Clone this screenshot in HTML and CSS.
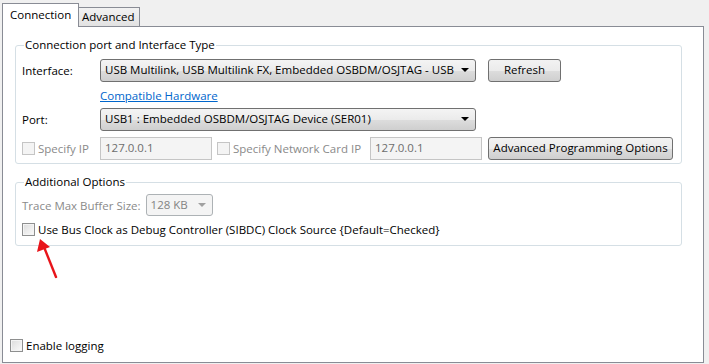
FILE: index.html
```html
<!DOCTYPE html>
<html>
<head>
    <title>Connection</title>
    <link rel="stylesheet" href="styles.css">
</head>
<body>
    <div class="tabs">
        <div class="tab active">Connection</div>
        <div class="tab">Advanced</div>
    </div>
    <div class="panel">
        <fieldset class="group first">
            <legend>Connection port and Interface Type</legend>
            <div class="row">
                <span class="label">Interface:</span>
                <div class="combo wide">USB Multilink, USB Multilink FX, Embedded OSBDM/OSJTAG - USB <span class="arrow"></span></div>
                <div class="button refresh">Refresh</div>
            </div>
            <div class="row link-row">
                <span class="label"></span>
                <a class="link" href="#">Compatible Hardware</a>
            </div>
            <div class="row">
                <span class="label">Port:</span>
                <div class="combo wide">USB1 : Embedded OSBDM/OSJTAG Device (SER01) <span class="arrow"></span></div>
            </div>
            <div class="row">
                <span class="label check disabled"><span class="box"></span>Specify IP</span>
                <div class="field ip">127.0.0.1</div>
                <span class="check disabled net"><span class="box"></span>Specify Network Card IP</span>
                <div class="field ip">127.0.0.1</div>
                <div class="button adv">Advanced Programming Options</div>
            </div>
        </fieldset>

        <fieldset class="group second">
            <legend>Additional Options</legend>
            <div class="row">
                <span class="muted">Trace Max Buffer Size:</span>
                <div class="combo small disabled-combo">128 KB <span class="arrow"></span></div>
            </div>
            <div class="row">
                <span class="check"><span class="box"></span>Use Bus Clock as Debug Controller (SIBDC) Clock Source {Default=Checked}</span>
            </div>
        </fieldset>

        <div class="logging">
            <span class="check"><span class="box"></span>Enable logging</span>
        </div>

        <svg class="pointer" width="30" height="50" viewBox="0 0 30 50">
            <line x1="23" y1="44" x2="11" y2="14" stroke="#e8141a" stroke-width="2.4" stroke-linecap="round"/>
            <polygon points="7,6 4,19 17,14" fill="#e8141a"/>
        </svg>
    </div>
</body>
</html>
```

FILE: styles.css
```css
body {
    margin: 0;
    width: 709px;
    height: 364px;
    background: #f0f0f0;
    font-family: "Open Sans", "Noto Sans", sans-serif;
    font-size: 11.5px;
    color: #000;
    overflow: hidden;
}

.tabs {
    display: flex;
    align-items: flex-end;
    height: 26px;
    padding-left: 2px;
}

.tab {
    box-sizing: border-box;
    height: 19px;
    padding: 0 4px 0 3px;
    line-height: 18px;
    border: 1px solid #898c95;
    border-bottom: none;
    background: linear-gradient(#f2f2f2, #e2e2e2);
    margin-left: -1px;
}

.tab.active {
    height: 24px;
    padding: 0 7px 0 7px;
    line-height: 22px;
    background: #fff;
    margin-left: 0;
    margin-bottom: -1px;
    position: relative;
    z-index: 1;
    width: 77px;
}

.panel {
    position: relative;
    box-sizing: border-box;
    height: 337px;
    margin: 0 5px 0 2px;
    border: 1px solid #898c95;
    background: #fff;
    display: flex;
    flex-direction: column;
    padding: 10px 21px 7px 12px;
}

.group {
    margin: 0;
    padding: 0 6px;
    border: 1px solid #d5dfe5;
    border-radius: 3px;
}

.group legend {
    padding: 0 1px;
    margin-left: 2px;
    line-height: 16px;
}

.group.first {
    padding-top: 6px;
    padding-bottom: 3px;
}

.group.second {
    margin-top: 10px;
    padding-top: 4px;
    padding-bottom: 5px;
}

.row {
    display: flex;
    align-items: center;
    height: 23px;
    margin-bottom: 6px;
}

.group.first .row:last-child,
.group.second .row:last-child {
    margin-bottom: 0;
}

.first .row:first-child {
    margin-bottom: 4px;
}

.link-row {
    height: 14px;
    margin-top: 4px;
    margin-bottom: 6px;
}

.second .row {
    height: 22px;
    margin-bottom: 2px;
}

.label {
    width: 78px;
    flex: none;
}

.combo {
    box-sizing: border-box;
    position: relative;
    height: 23px;
    line-height: 20px;
    padding: 0 22px 0 4px;
    border: 1px solid #707070;
    border-radius: 3px;
    background: linear-gradient(#f4f4f4 0%, #ebebeb 50%, #dddddd 51%, #cfcfcf 100%);
    white-space: nowrap;
    overflow: hidden;
}

.combo.wide {
    width: 376px;
}

.combo.small {
    width: 67px;
    height: 22px;
    margin-left: 5px;
}

.arrow {
    position: absolute;
    right: 6px;
    top: 8px;
    border-left: 4px solid transparent;
    border-right: 4px solid transparent;
    border-top: 4px solid #000;
}

.disabled-combo {
    background: #f4f4f4;
    border-color: #adb2b5;
    color: #838383;
}

.disabled-combo .arrow {
    border-top-color: #a0a0a0;
}

.button {
    box-sizing: border-box;
    height: 23px;
    line-height: 20px;
    border: 1px solid #707070;
    border-radius: 3px;
    background: linear-gradient(#f2f2f2 0%, #ebebeb 50%, #dddddd 51%, #cfcfcf 100%);
    text-align: center;
    white-space: nowrap;
}

.refresh {
    width: 73px;
    margin-left: 12px;
}

.adv {
    width: 185px;
    margin-left: 6px;
}

.link {
    color: #0066cc;
}

.check {
    display: inline-flex;
    align-items: center;
    white-space: nowrap;
}

.box {
    box-sizing: border-box;
    width: 13px;
    height: 13px;
    margin-right: 3px;
    border: 1px solid #8e8f8f;
    background: linear-gradient(135deg, #dcdcdc, #fbfbfb);
    box-shadow: inset 0 0 0 1px #f4f4f4;
}

.check.disabled {
    color: #8a8a8a;
}

.check.disabled .box {
    border-color: #c5c5c5;
    background: #f4f4f4;
}

.field {
    box-sizing: border-box;
    height: 23px;
    line-height: 20px;
    padding: 0 4px;
    border: 1px solid #c5c5c5;
    background: #f4f4f4;
    color: #6d6d6d;
}

.field.ip {
    width: 112px;
}

.net {
    margin-left: 5px;
    width: 153px;
}

.muted {
    color: #8a8a8a;
}

.logging {
    margin-top: auto;
    margin-left: -5px;
}

.pointer {
    position: absolute;
    left: 30px;
    top: 206px;
}
```
